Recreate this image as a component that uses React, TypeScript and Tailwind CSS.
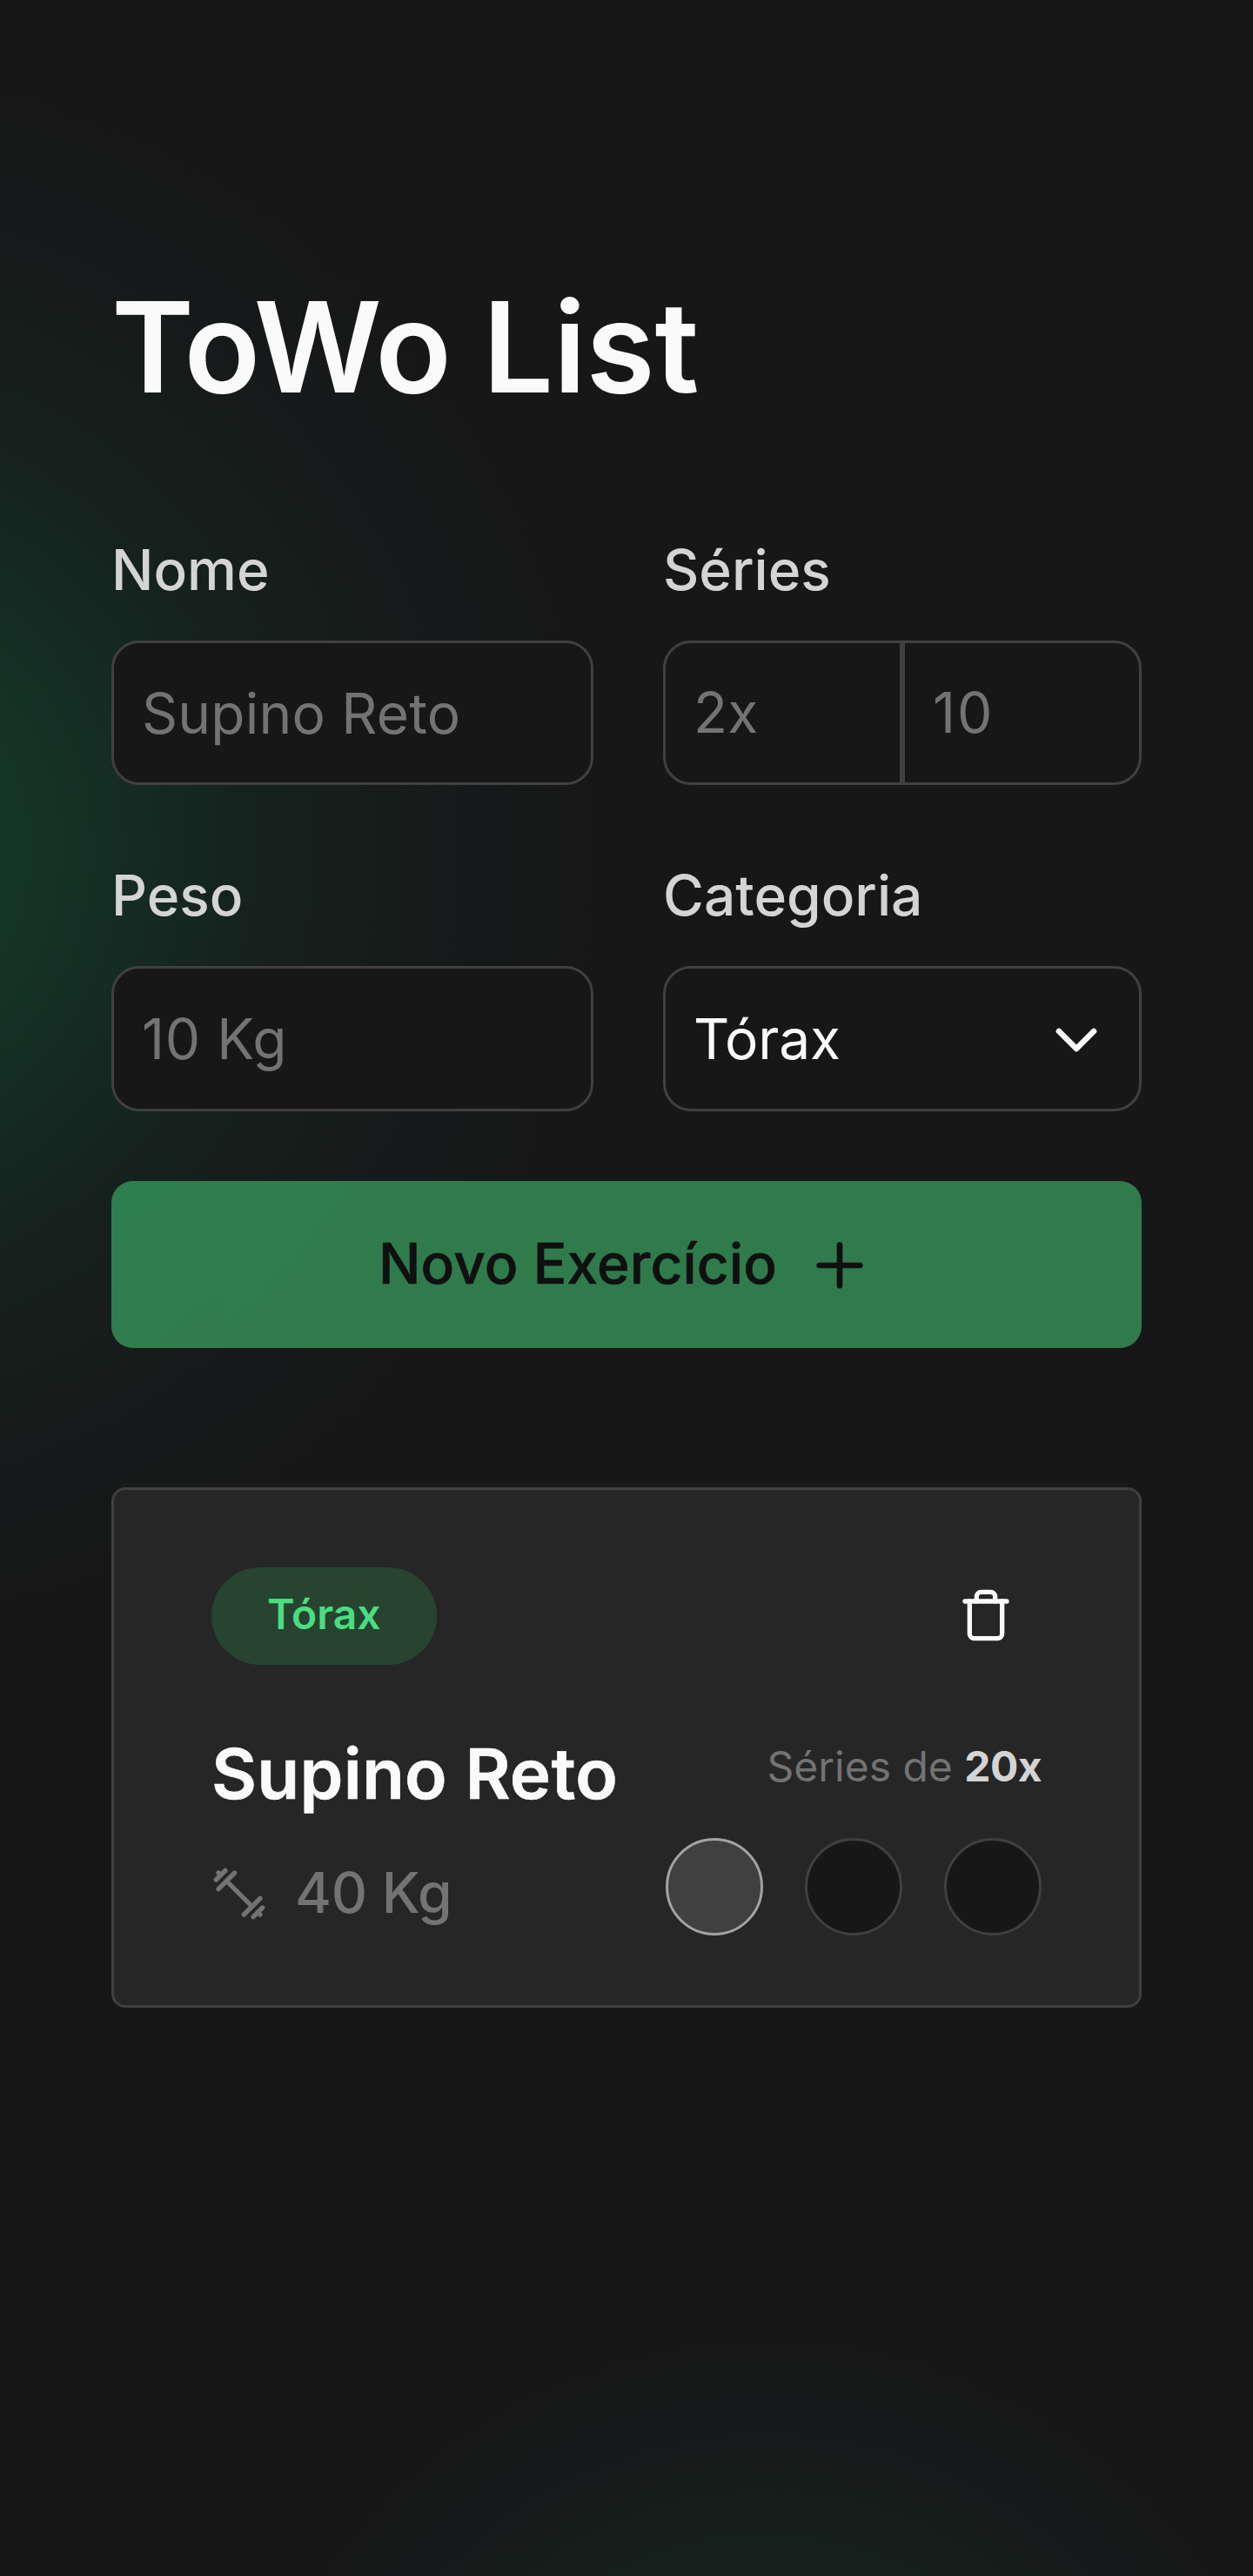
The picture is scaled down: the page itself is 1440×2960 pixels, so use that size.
import { ChevronDown, Plus, Trash } from "lucide-react";
import type { ReactNode } from "react";

const control =
  "border-[3px] border-[#404040] bg-[#171717] px-8 text-[64px] tracking-[0.2px] text-[#fafafa] outline-none placeholder:text-[#737373] placeholder:opacity-100";

function Field({ label, children }: { label: string; children: ReactNode }) {
  return (
    <label className="flex flex-col gap-[43px]">
      <span className="text-[64px] leading-[77px] font-medium text-[#d4d4d4]">{label}</span>
      {children}
    </label>
  );
}

function Dumbbell() {
  return (
    <svg
      className="size-16"
      viewBox="0 0 24 24"
      fill="none"
      stroke="currentColor"
      strokeWidth="2"
      strokeLinecap="round"
      strokeLinejoin="round"
    >
      <path d="m6.5 6.5 11 11" />
      <path d="m21 21-1-1" />
      <path d="m3 3 1 1" />
      <path d="m18 22 4-4" />
      <path d="m2 6 4-4" />
      <path d="m3 10 7-7" />
      <path d="m14 21 7-7" />
    </svg>
  );
}

function SetDot({ done = false }: { done?: boolean }) {
  return (
    <span
      className={
        done
          ? "size-28 rounded-full border-[3px] border-[#a3a3a3] bg-[#404040]"
          : "size-28 rounded-full border-[3px] border-[#404040] bg-[#171717]"
      }
    />
  );
}

function ExerciseCard() {
  return (
    <article className="mt-40 h-[598px] rounded-2xl border-[3px] border-[#404040] bg-[#262626] px-28 pt-[89px]">
      <div className="flex h-[112.6px] items-center justify-between">
        <span className="flex h-full items-center rounded-full bg-[#264430] px-16 pb-[5px] text-5xl font-semibold text-[#4ade80]">
          Tórax
        </span>
        <button className="mr-8 mb-[3px]" aria-label="Remover">
          <Trash className="size-16 text-[#fafafa]" />
        </button>
      </div>
      <div className="mt-[76px] flex justify-between">
        <div>
          <h2 className="text-[80px] leading-[97px] font-semibold tracking-[0.25px] text-[#fafafa] [-webkit-text-stroke:0.6px]">
            Supino Reto
          </h2>
          <p className="mt-[52px] flex items-center gap-8 text-[64px] leading-[77px] font-medium text-[#737373]">
            <Dumbbell />
            <span className="-mt-[2px] tracking-[-0.2px]">40 Kg</span>
          </p>
        </div>
        <div className="flex flex-col items-end pt-[9px]">
          <p className="text-5xl leading-[64px] text-[#737373]">
            Séries de <strong className="font-bold tracking-[-0.6px] text-[#d4d4d4]">20x</strong>
          </p>
          <div className="mt-[50px] flex gap-12">
            <SetDot done />
            <SetDot />
            <SetDot />
          </div>
        </div>
      </div>
    </article>
  );
}

export default function App() {
  return (
    <div
      className="h-[2960px] w-[1440px] overflow-hidden bg-[#171717] px-32 pt-[312px] font-['Inter',sans-serif]"
      style={{
        backgroundImage:
          "radial-gradient(circle 906px at -213px 975px, #15402b 0%, #143728 23%, #152b23 41%, #15221e 55%, #161d1b 69%, #16191a 85%, #171717 100%), radial-gradient(circle 625px at 880px 3308px, #15402b 0%, #143728 23%, #152b23 41%, #15221e 55%, #161d1b 69%, #16191a 85%, #171717 100%)",
        backgroundSize: "1440px 2300px, 1440px 2960px",
        backgroundRepeat: "no-repeat",
      }}
    >
      <h1 className="text-[144px] leading-[174px] font-semibold tracking-[-0.2px] text-[#fafafa]">ToWo List</h1>
      <form className="mt-[130px]" onSubmit={(e) => e.preventDefault()}>
        <div className="grid grid-cols-[554px_550px] gap-x-20 gap-y-[88px]">
          <Field label="Nome">
            <input className={`${control} h-[166.4px] rounded-[32px]`} placeholder="Supino Reto" />
          </Field>
          <Field label="Séries">
            <div className="flex h-[166.4px]">
              <input className={`${control} w-1/2 rounded-l-[32px]`} placeholder="2x" />
              <input className={`${control} w-1/2 rounded-r-[32px] placeholder:tracking-[2px]`} placeholder="10" />
            </div>
          </Field>
          <Field label="Peso">
            <input className={`${control} h-[166.4px] rounded-[32px] placeholder:tracking-[0.6px]`} placeholder="10 Kg" />
          </Field>
          <Field label="Categoria">
            <div className={`${control} flex h-[166.4px] items-center justify-between rounded-[32px]`}>
              <span className="tracking-[-0.2px]">Tórax</span>
              <ChevronDown className="mt-[3px] size-20" />
            </div>
          </Field>
        </div>
        <button className="mt-20 flex h-48 w-full items-center justify-center gap-8 rounded-[25px] bg-[#4ade80] text-[64px] font-medium tracking-[0.15px] text-[#0a0a0a] opacity-50">
          <span className="-mt-0.5 [-webkit-text-stroke:0.6px]">Novo Exercício</span>
          <Plus className="mt-[3px] size-20" />
        </button>
      </form>
      <ExerciseCard />
    </div>
  );
}
